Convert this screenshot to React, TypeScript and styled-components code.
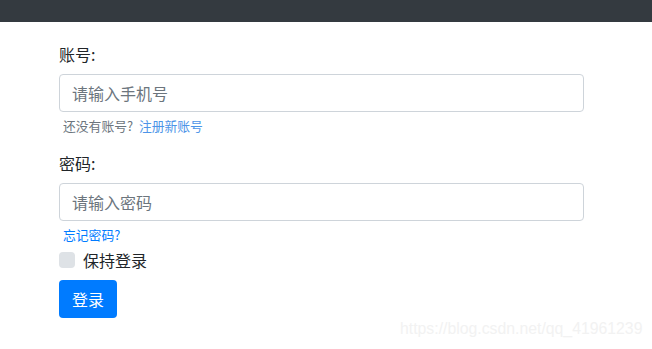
import React from "react";
import styled, { createGlobalStyle } from "styled-components";

const Global = createGlobalStyle`
  html, body { margin: 0; padding: 0; background: #fff; }
  body {
    font-family: "Noto Sans CJK SC", "Liberation Sans", sans-serif;
    color: #212529;
    -webkit-font-smoothing: antialiased;
  }
  * { box-sizing: border-box; }
`;

const Page = styled.div`
  position: relative;
  width: 652px;
  height: 349px;
  overflow: hidden;
`;

const TopBar = styled.div`
  height: 22px;
  background: #343a40;
`;

const Form = styled.form`
  width: 525px;
  margin-left: 59px;
  padding-top: 20px;
  display: flex;
  flex-direction: column;
`;

const Group = styled.div<{ $mb?: number }>`
  display: flex;
  flex-direction: column;
  margin-bottom: ${(p) => p.$mb ?? 0}px;
`;

const Label = styled.label`
  font-size: 16px;
  line-height: 24px;
  height: 24px;
  margin-bottom: 8px;
`;

const Input = styled.input`
  height: 38px;
  width: 100%;
  padding: 0 12px;
  font-size: 16px;
  font-family: inherit;
  color: #495057;
  border: 1px solid #ced4da;
  border-radius: 4px;
  outline: none;
  &::placeholder { color: #6c757d; }
`;

const Help = styled.small`
  margin-top: 4px;
  padding-left: 4px;
  font-size: 12.8px;
  line-height: 19px;
  height: 19px;
  color: #6c757d;
  white-space: nowrap;
`;

const Link = styled.a<{ $tone?: "light" | "primary" }>`
  color: ${(p) => (p.$tone === "light" ? "#4d94e8" : "#007bff")};
  margin-left: ${(p) => (p.$tone === "light" ? 3 : 0)}px;
  text-decoration: none;
`;

const CheckRow = styled.label`
  margin-top: 4px;
  height: 24px;
  display: flex;
  align-items: center;
  gap: 8px;
  font-size: 16px;
`;

const Box = styled.span`
  width: 16px;
  height: 16px;
  border-radius: 4px;
  background: #dee2e6;
`;

const Button = styled.button`
  margin-top: 8px;
  align-self: flex-start;
  height: 38px;
  width: 58px;
  padding: 0;
  border: none;
  border-radius: 4px;
  background: #007bff;
  color: #fff;
  font-size: 16px;
  font-family: inherit;
`;

const Watermark = styled.div`
  position: absolute;
  left: 400px;
  top: 319px;
  font-family: "Liberation Sans", Arial, sans-serif;
  font-size: 15.8px;
  line-height: 20px;
  color: #f2f2f2;
  white-space: nowrap;
`;

export default function App() {
  return (
    <Page>
      <Global />
      <TopBar />
      <Form onSubmit={(e) => e.preventDefault()}>
        <Group $mb={16}>
          <Label>账号:</Label>
          <Input placeholder="请输入手机号" />
          <Help>
            还没有账号?<Link $tone="light" href="#"> 注册新账号</Link>
          </Help>
        </Group>
        <Group>
          <Label>密码:</Label>
          <Input type="password" placeholder="请输入密码" />
          <Help>
            <Link href="#">忘记密码?</Link>
          </Help>
        </Group>
        <CheckRow>
          <Box />
          保持登录
        </CheckRow>
        <Button type="submit">登录</Button>
      </Form>
      <Watermark>https://blog.csdn.net/qq_41961239</Watermark>
    </Page>
  );
}
